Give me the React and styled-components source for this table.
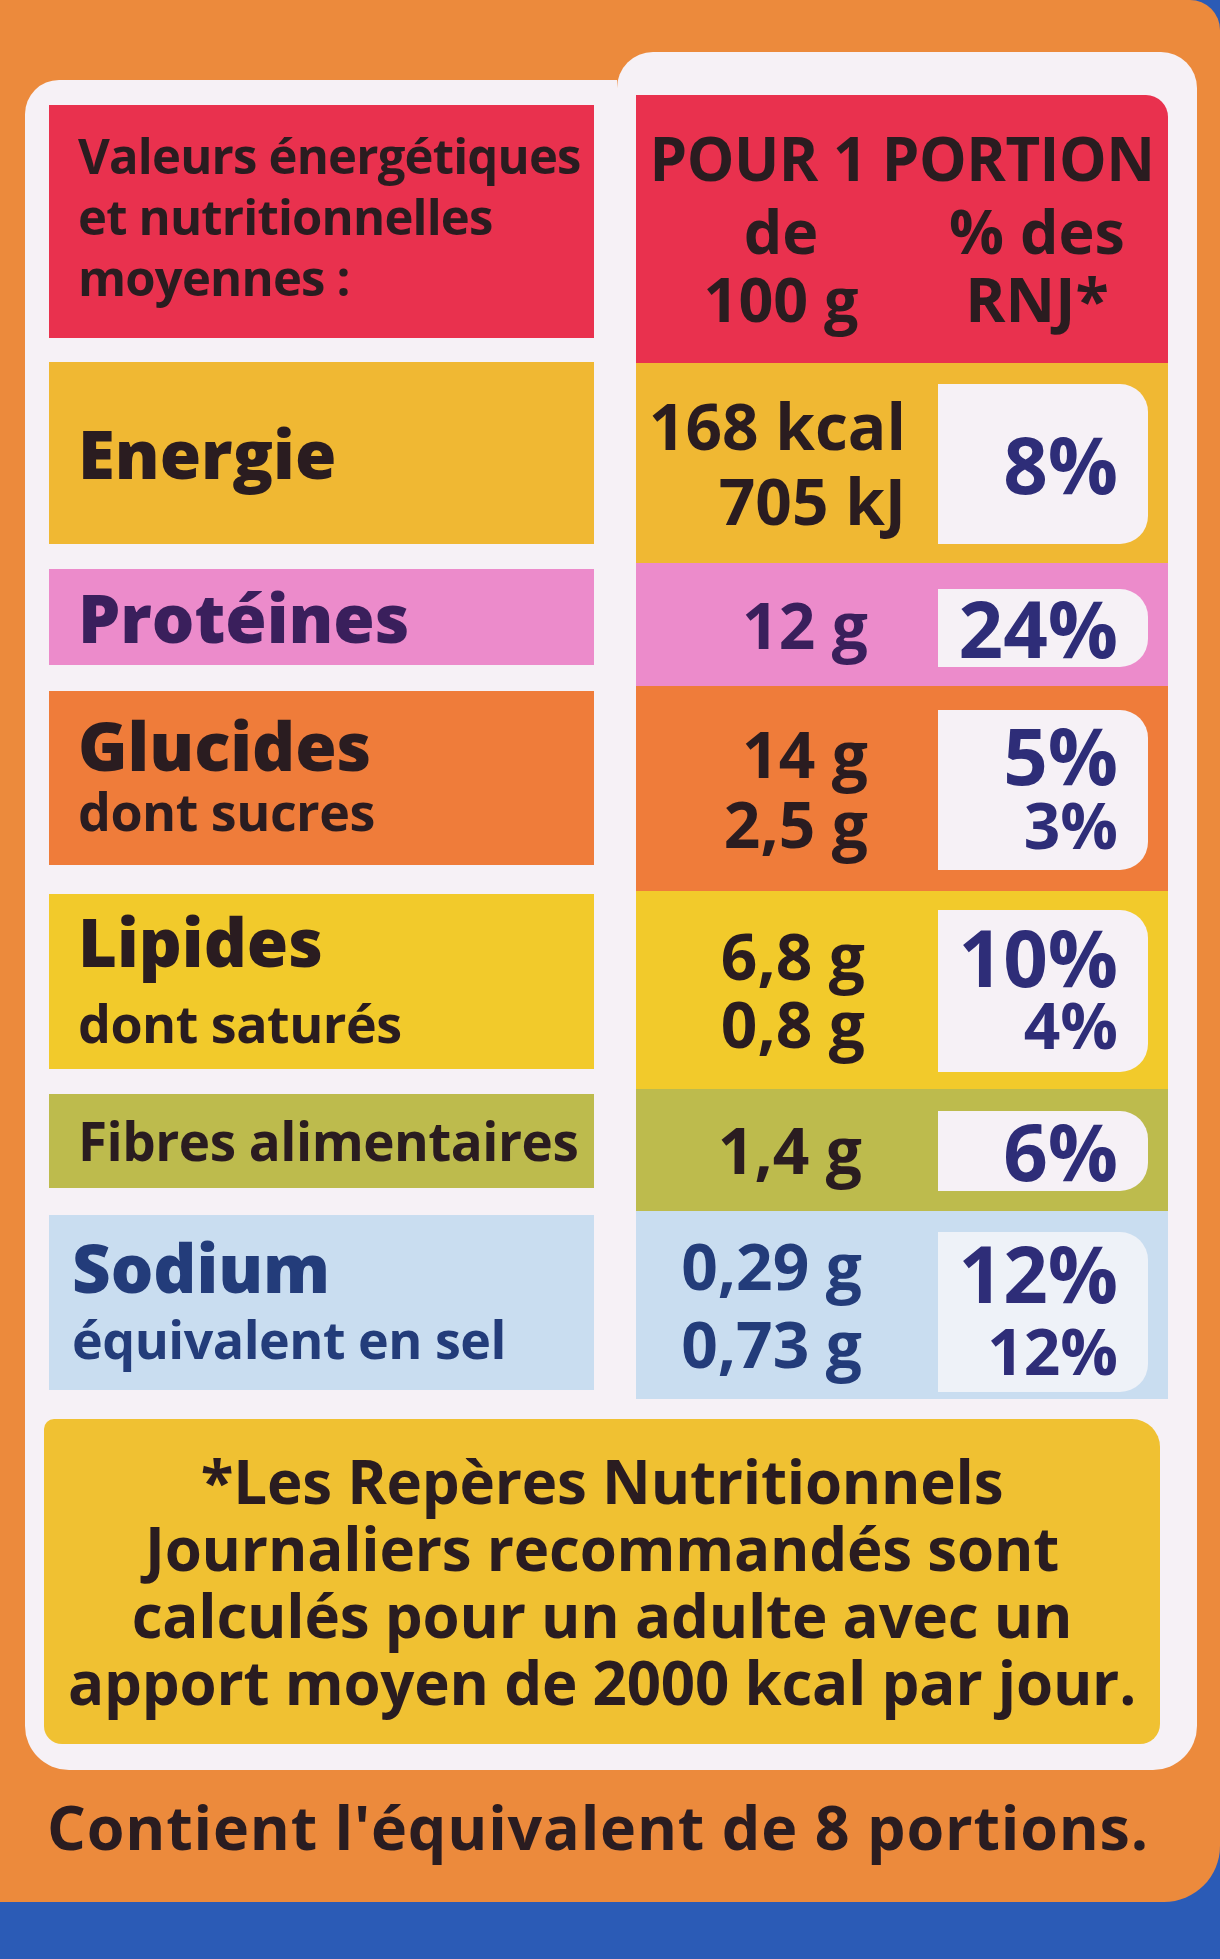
import React from "react";
import styled, { createGlobalStyle } from "styled-components";

const GlobalStyle = createGlobalStyle`
  html, body {
    margin: 0;
    padding: 0;
    background: #2b5bb6;
  }
  body {
    font-family: "Open Sans", "Noto Sans", "DejaVu Sans", sans-serif;
  }
`;

const Root = styled.div`
  width: 1220px;
  height: 1959px;
  background: #2b5bb6;
  overflow: hidden;
`;

const Package = styled.div`
  height: 1902px;
  background: #ec8a3c;
  border-radius: 0 30px 56px 0;
  padding-top: 52px;
  box-sizing: border-box;
`;

const Card = styled.div`
  margin-left: 25px;
  width: 1172px;
  display: flex;
  flex-direction: column;
`;

const Columns = styled.div`
  display: flex;
  align-items: stretch;
`;

const LeftPane = styled.div`
  width: 592px;
  margin-top: 28px;
  background: #f6f1f6;
  border-radius: 34px 0 0 0;
  padding: 25px 0 0 24px;
  box-sizing: border-box;
  display: flex;
  flex-direction: column;
`;

const RightPane = styled.div`
  width: 580px;
  background: #f6f1f6;
  border-radius: 36px 36px 0 0;
  padding: 43px 29px 0 19px;
  box-sizing: border-box;
  display: flex;
  flex-direction: column;
`;

const LabelBox = styled.div`
  height: ${(p) => p.h}px;
  margin-top: ${(p) => p.mt}px;
  width: 545px;
  background: ${(p) => p.bg};
  color: ${(p) => p.color || "#2a1c20"};
  display: flex;
  flex-direction: column;
  justify-content: center;
  padding-left: ${(p) => p.pl || 29}px;
  box-sizing: border-box;
`;

const HeaderBox = styled(LabelBox)`
  justify-content: flex-start;
  padding-top: 20px;
`;

const HeaderLine = styled.div`
  font-size: 49px;
  font-weight: 700;
  line-height: 61px;
  letter-spacing: -0.8px;
  white-space: nowrap;
`;

const MainLabel = styled.div`
  font-size: 67px;
  font-weight: 800;
  line-height: ${(p) => p.lh || 70}px;
  white-space: nowrap;
`;

const SubLabel = styled.div`
  font-size: ${(p) => p.size || 52}px;
  font-weight: 700;
  line-height: ${(p) => p.lh || 66}px;
  letter-spacing: -0.5px;
  white-space: nowrap;
`;

const RightHeader = styled.div`
  height: 268px;
  background: #e9314e;
  border-radius: 0 22px 0 0;
  color: #2a1c20;
  display: flex;
  flex-direction: column;
  padding-top: 28px;
  box-sizing: border-box;
`;

const PortionTitle = styled.div`
  text-align: center;
  font-size: 60px;
  font-weight: 700;
  line-height: 70px;
  letter-spacing: -0.5px;
  white-space: nowrap;
`;

const SubHead = styled.div`
  display: grid;
  grid-template-columns: 290px 222px;
  margin-top: 4px;
`;

const SubHeadCell = styled.div`
  text-align: center;
  font-size: 61px;
  font-weight: 700;
  line-height: 68px;
  white-space: nowrap;
`;

const DataRow = styled.div`
  height: ${(p) => p.h}px;
  background: ${(p) => p.bg};
  display: grid;
  grid-template-columns: 302px 210px;
  padding: ${(p) => p.pt}px 20px ${(p) => p.pb}px 0;
  box-sizing: border-box;
`;

const ValueCell = styled.div`
  display: flex;
  flex-direction: column;
  justify-content: center;
  align-items: flex-end;
  padding-right: ${(p) => p.pr}px;
  margin-top: ${(p) => -p.pt}px;
  margin-bottom: ${(p) => -p.pb}px;
  color: ${(p) => p.color || "#2a1c20"};
`;

const Value = styled.div`
  font-size: 64px;
  font-weight: 700;
  line-height: ${(p) => p.lh}px;
  white-space: nowrap;
`;

const PctBox = styled.div`
  background: ${(p) => p.bg || "#f6f1f6"};
  border-radius: 0 28px 28px 0;
  display: flex;
  flex-direction: column;
  justify-content: center;
  align-items: flex-end;
  padding-right: 30px;
  color: #2e2d78;
`;

const Pct = styled.div`
  font-size: ${(p) => (p.small ? 64 : 78)}px;
  font-weight: 700;
  line-height: ${(p) => p.lh}px;
  white-space: nowrap;
`;

const FooterWrap = styled.div`
  background: #f6f1f6;
  border-radius: 0 0 44px 44px;
  padding: 20px 37px 26px 19px;
`;

const Note = styled.div`
  height: 325px;
  background: #f0c132;
  border-radius: 10px 28px 20px 18px;
  display: flex;
  flex-direction: column;
  justify-content: center;
  align-items: center;
  color: #2a1c20;
`;

const NoteLine = styled.div`
  font-size: 60px;
  font-weight: 700;
  line-height: 67px;
  letter-spacing: -0.2px;
  white-space: nowrap;
`;

const Portions = styled.div`
  margin-top: 17px;
  text-align: center;
  width: 1196px;
  font-size: 61px;
  font-weight: 700;
  line-height: 80px;
  color: #2a1c20;
  letter-spacing: 0.8px;
  white-space: nowrap;
`;

const leftRows = [
  { bg: "#f0b833", h: 182, mt: 24, main: ["Energie"] },
  { bg: "#ec8bcb", h: 96, mt: 25, main: ["Protéines"], color: "#3a1f5c" },
  { bg: "#ef7c3a", h: 174, mt: 26, main: ["Glucides"], sub: "dont sucres", lh: 65 },
  { bg: "#f2ca2b", h: 175, mt: 29, main: ["Lipides"], sub: "dont saturés", lh: 81 },
  { bg: "#bdbb4d", h: 94, mt: 25, sub: "Fibres alimentaires", subSize: 53 },
  { bg: "#c9ddf0", h: 175, mt: 27, main: ["Sodium"], sub: "équivalent en sel", lh: 72, color: "#233c7a", pl: 23 },
];

const rightRows = [
  { bg: "#f0b833", h: 200, pt: 21, pb: 19, values: ["168 kcal", "705 kJ"], pr: 32, lh: 75, pcts: ["8%"] },
  { bg: "#ec8bcb", h: 123, pt: 26, pb: 19, values: ["12 g"], pr: 70, lh: 78, pcts: ["24%"], color: "#3a1f5c" },
  { bg: "#ef7c3a", h: 205, pt: 24, pb: 21, values: ["14 g", "2,5 g"], pr: 70, lh: 70, pcts: ["5%", "3%"] },
  { bg: "#f2ca2b", h: 198, pt: 19, pb: 17, values: ["6,8 g", "0,8 g"], pr: 73, lh: 68, pcts: ["10%", "4%"] },
  { bg: "#bdbb4d", h: 122, pt: 22, pb: 20, values: ["1,4 g"], pr: 76, lh: 78, pcts: ["6%"] },
  { bg: "#c9ddf0", h: 188, pt: 21, pb: 7, values: ["0,29 g", "0,73 g"], pr: 76, lh: 78, pcts: ["12%", "12%"], color: "#233c7a", box: "#eef2f8" },
];

const App = () => {
  return (
    <Root>
      <GlobalStyle />
      <Package>
        <Card>
          <Columns>
            <LeftPane>
              <HeaderBox bg="#e9314e" h={233} mt={0}>
                <HeaderLine>Valeurs énergétiques</HeaderLine>
                <HeaderLine>et nutritionnelles</HeaderLine>
                <HeaderLine>moyennes :</HeaderLine>
              </HeaderBox>
              {leftRows.map((r, i) => (
                <LabelBox key={i} bg={r.bg} h={r.h} mt={r.mt} color={r.color} pl={r.pl}>
                  {r.main && r.main.map((m) => (
                    <MainLabel key={m} lh={r.lh}>{m}</MainLabel>
                  ))}
                  {r.sub && (
                    <SubLabel size={r.subSize} lh={r.lh}>{r.sub}</SubLabel>
                  )}
                </LabelBox>
              ))}
            </LeftPane>

            <RightPane>
              <RightHeader>
                <PortionTitle>POUR 1 PORTION</PortionTitle>
                <SubHead>
                  <SubHeadCell>de<br />100 g</SubHeadCell>
                  <SubHeadCell>% des<br />RNJ*</SubHeadCell>
                </SubHead>
              </RightHeader>
              {rightRows.map((r, i) => (
                <DataRow key={i} bg={r.bg} h={r.h} pt={r.pt} pb={r.pb}>
                  <ValueCell pr={r.pr} pt={r.pt} pb={r.pb} color={r.color}>
                    {r.values.map((v, j) => (
                      <Value key={j} lh={r.lh}>{v}</Value>
                    ))}
                  </ValueCell>
                  <PctBox bg={r.box}>
                    {r.pcts.map((v, j) => (
                      <Pct key={j} small={j > 0} lh={r.lh}>{v}</Pct>
                    ))}
                  </PctBox>
                </DataRow>
              ))}
            </RightPane>
          </Columns>

          <FooterWrap>
            <Note>
              <NoteLine>*Les Repères Nutritionnels</NoteLine>
              <NoteLine>Journaliers recommandés sont</NoteLine>
              <NoteLine>calculés pour un adulte avec un</NoteLine>
              <NoteLine>apport moyen de 2000 kcal par jour.</NoteLine>
            </Note>
          </FooterWrap>
        </Card>
        <Portions>Contient l'équivalent de 8 portions.</Portions>
      </Package>
    </Root>
  );
};

export default App;
